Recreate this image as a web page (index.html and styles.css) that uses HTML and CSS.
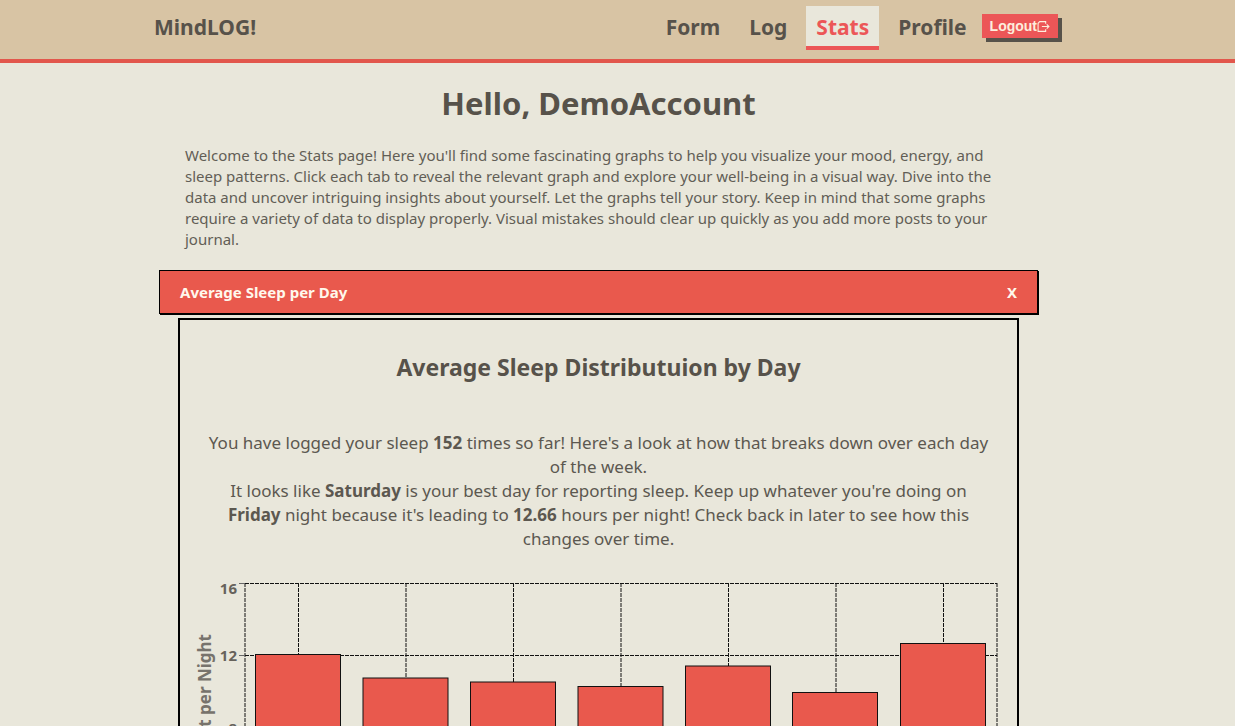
FILE: index.html
```html
<!DOCTYPE html>
<html lang="en">
<head>
<meta charset="utf-8">
<title>MindLOG!</title>
<link rel="stylesheet" href="styles.css">
</head>
<body>
<header class="header">
  <div class="brand">MindLOG!</div>
  <nav class="nav">
    <a class="nav-link" href="#">Form</a>
    <a class="nav-link" href="#">Log</a>
    <a class="nav-link active" href="#">Stats</a>
    <a class="nav-link" href="#">Profile</a>
    <button class="logout" type="button">Logout<svg class="logout-icon" viewBox="0 0 12 12" aria-hidden="true"><path d="M8 3.5V1.5H2.5L1 3V10.5H8V8.5M4.5 6H11M9 4L11 6L9 8"/></svg></button>
  </nav>
</header>
<main class="content">
  <h1 class="title">Hello, DemoAccount</h1>
  <p class="intro">Welcome to the Stats page! Here you'll find some fascinating graphs to help you visualize your mood, energy, and<br>sleep patterns. Click each tab to reveal the relevant graph and explore your well-being in a visual way. Dive into the<br>data and uncover intriguing insights about yourself. Let the graphs tell your story. Keep in mind that some graphs<br>require a variety of data to display properly. Visual mistakes should clear up quickly as you add more posts to your<br>journal.</p>
  <button class="tab" type="button"><span>Average Sleep per Day</span><span>X</span></button>
  <section class="panel">
    <h2 class="panel-title">Average Sleep Distributuion by Day</h2>
    <p class="summary">You have logged your sleep <b>152</b> times so far! Here's a look at how that breaks down over each day<br>of the week.<br>It looks like <b>Saturday</b> is your best day for reporting sleep. Keep up whatever you're doing on<br><b>Friday</b> night because it's leading to <b>12.66</b> hours per night! Check back in later to see how this<br>changes over time.</p>
    <svg class="chart" viewBox="0 0 837 320" role="img" aria-label="Average sleep per night by day">
      <g class="grid">
        <path d="M65 13.5H817M65 85.5H817M65 158.5H817M65 230.5H817"/>
        <path d="M65 13V303M118.5 13V303M226 13V303M333.5 13V303M441 13V303M548.5 13V303M656 13V303M763.5 13V303M817 13V303"/>
      </g>
      <path class="ticks" d="M59 13.5H65M59 85.5H65M59 158.5H65M59 230.5H65M59 303H65"/>
      <g class="bars">
        <rect x="75.5" y="84.5" width="85" height="218.5"/>
        <rect x="183" y="108" width="85" height="195"/>
        <rect x="290.5" y="112" width="85" height="191"/>
        <rect x="398" y="116.5" width="85" height="186.5"/>
        <rect x="505.5" y="96" width="85" height="207"/>
        <rect x="612.5" y="122.5" width="85" height="180.5"/>
        <rect x="720.5" y="73.5" width="85" height="229.5"/>
      </g>
      <g class="axis-text">
        <text x="57" y="24">16</text>
        <text x="57" y="91">12</text>
        <text x="57" y="164">8</text>
        <text x="57" y="236">4</text>
      </g>
      <text class="axis-title" transform="translate(31 64) rotate(-90)">Hours Slept per Night</text>
    </svg>
  </section>
</main>
</body>
</html>
```
FILE: styles.css
```css
* { box-sizing: border-box; }
body {
  margin: 0;
  height: 100vh;
  overflow: hidden;
  background: #e9e7db;
  color: #57524a;
  font-family: "Segoe UI", "Noto Sans", sans-serif;
}
.header {
  display: flex;
  justify-content: space-between;
  align-items: flex-start;
  padding: 6px 173px 9px 154px;
  background: #d8c4a4;
  border-bottom: 4px solid #e2574c;
}
.brand, .nav-link {
  padding-top: 2px;
  font-size: 21px;
  font-weight: 700;
  line-height: 38px;
}
.nav {
  display: flex;
  align-items: flex-start;
  gap: 9px;
}
.nav-link {
  padding-left: 10px;
  padding-right: 10px;
  color: inherit;
  text-decoration: none;
  border-bottom: 4px solid transparent;
}
.nav-link.active {
  color: #ec5657;
  background: #e9e7db;
  border-bottom-color: #ec5657;
}
.logout {
  display: flex;
  align-items: center;
  margin: 8px 4px 0 -4px;
  padding: 0 8px;
  height: 24px;
  border: 0;
  background: #ec5657;
  color: #fdeedd;
  box-shadow: 4px 4px 0 #57524a;
  font: 700 14px "Liberation Sans", sans-serif;
}
.logout-icon {
  width: 13px;
  height: 13px;
  fill: none;
  stroke: currentColor;
}
.content {
  display: flex;
  flex-direction: column;
  margin: 0 197px 0 159px;
}
.title {
  margin: 19px 0 21px;
  font-size: 31px;
  line-height: 42px;
  text-align: center;
}
.intro {
  margin: 0 0 20px;
  padding: 0 26px;
  color: #625e56;
  font-size: 15px;
  line-height: 21px;
  white-space: nowrap;
}
.tab {
  display: flex;
  justify-content: space-between;
  align-items: center;
  height: 44px;
  padding: 0 20px;
  border: 1px solid #000;
  background: #e9594d;
  color: #fff8ec;
  box-shadow: 1px 1px 0 #000;
  font: 700 15px "Segoe UI", "Noto Sans", sans-serif;
}
.panel {
  margin: 4px 19px 0;
  border: 2px solid #000;
}
.panel-title {
  margin: 31px 0 48px;
  font-size: 23px;
  line-height: 32px;
  text-align: center;
}
.summary {
  margin: 0 0 19px;
  color: #5c5850;
  font-size: 17px;
  line-height: 24px;
  text-align: center;
}
.chart { display: block; width: 100%; }
.grid { fill: none; stroke: #111; stroke-dasharray: 4 1; }
.ticks { fill: none; stroke: #666; }
.bars { fill: #e9594d; stroke: #111; }
.axis-text { fill: #66625b; font-size: 15px; font-weight: 700; text-anchor: end; }
.axis-title { fill: #77736c; font-size: 17px; font-weight: 700; text-anchor: end; }
```
